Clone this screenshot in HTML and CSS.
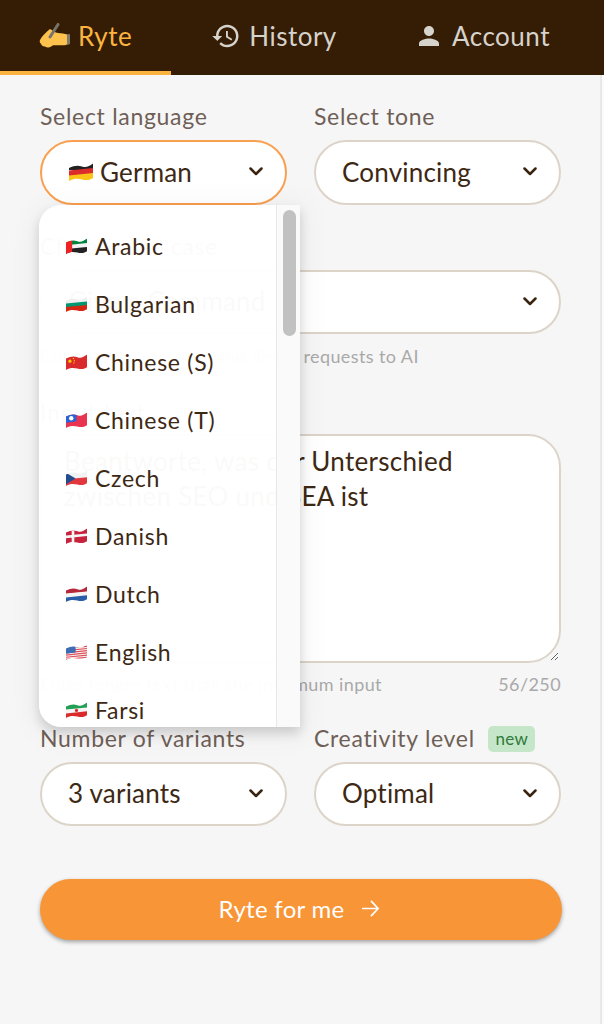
FILE: index.html
```html
<!DOCTYPE html>
<html lang="en">
<head>
<meta charset="utf-8">
<title>Ryte</title>
<link rel="stylesheet" href="styles.css">
</head>
<body>
<svg class="defs" width="0" height="0" aria-hidden="true">
  <defs>
    <clipPath id="wave"><path d="M0 5C5 2.500 9 2 13 3.500S20 3.500 24 .5V15C20 17.500 17 17.500 13 16.500S5 15 0 18Z"/></clipPath>
  </defs>
</svg>
<header class="tabs">
  <a class="tab active">
    <svg class="tab-icon hand" viewBox="0 0 31 26"><path d="M11 6C7 9 3 13 1 17c-.6 1.300-.3 3 1 3.800.7 2 2.500 3.200 4 2.700 1.500 1.300 4.500 1.300 6 0 1-.2 1.600-.6 1.800-1.300H24c2 0 4-.5 4.500-1.500V11.500c-3-1-6-1-9.500-1.500-3-.5-5-2.500-8-4Z" fill="#fdc24d"/><path d="M28 11.500 31 11v10l-3 1Z" fill="#7f7a70"/><path d="M19 1.500 11 14" stroke="#77736c" stroke-width="3" stroke-linecap="round"/></svg>
    <span>Ryte</span>
  </a>
  <a class="tab">
    <svg class="tab-icon" viewBox="0 0 24 24"><path d="M13 3c-4.970 0-9 4.030-9 9H1l3.890 3.890.07.14L9 12H6c0-3.870 3.130-7 7-7s7 3.130 7 7-3.130 7-7 7c-1.930 0-3.680-.79-4.940-2.060l-1.420 1.420C8.270 19.990 10.510 21 13 21c4.970 0 9-4.030 9-9s-4.030-9-9-9zm-1 5v5l4.280 2.540.72-1.210-3.500-2.080V8H12z"/></svg>
    <span>History</span>
  </a>
  <a class="tab">
    <svg class="tab-icon" viewBox="0 0 24 24"><path d="M12 12c2.210 0 4-1.790 4-4s-1.790-4-4-4-4 1.790-4 4 1.790 4 4 4zm0 2c-2.670 0-8 1.340-8 4v2h16v-2c0-2.660-5.330-4-8-4z"/></svg>
    <span>Account</span>
  </a>
</header>

<main class="form">
  <div class="row">
    <div class="field lang-field">
      <label class="label">Select language</label>
      <div class="select open">
        <svg class="flag flag-big" viewBox="0 0 24 18"><g clip-path="url(#wave)"><path fill="#222" d="M0 0h24v7H0z"/><path fill="#dd2c2c" d="M0 7.500 24 5v6L0 13.500z"/><path fill="#fcc419" d="M0 12.500 24 10v8H0z"/></g></svg>
        <span class="value">German</span>
        <svg class="chev" viewBox="0 0 14 9"><path d="M1.500 1.500 7 7l5.500-5.500"/></svg>
      </div>
      <div class="dropdown">
        <ul class="list">
          <li class="item"><svg class="flag" viewBox="0 0 24 18"><g clip-path="url(#wave)"><path fill="#00843d" d="M0 0h24v7.500L0 10z"/><path fill="#f4f4f4" d="M0 8 24 5.500v6L0 14z"/><path fill="#222" d="M0 12.500 24 10v8H0z"/><path fill="#e22" d="M0 0h7v18H0z"/></g></svg><span>Arabic</span></li>
          <li class="item"><svg class="flag" viewBox="0 0 24 18"><g clip-path="url(#wave)"><path fill="#f0f0f0" d="M0 0h24v7.500L0 10z"/><path fill="#00966e" d="M0 8.500 24 6v5.500L0 14z"/><path fill="#d62612" d="M0 12.500 24 10v8H0z"/></g></svg><span>Bulgarian</span></li>
          <li class="item"><svg class="flag" viewBox="0 0 24 18"><g clip-path="url(#wave)"><path fill="#d92b2b" d="M0 0h24v18H0z"/><circle cx="4.500" cy="8" r="1.800" fill="#fc0"/><circle cx="8.500" cy="5" r=".8" fill="#fc0"/><circle cx="9.500" cy="7.500" r=".8" fill="#fc0"/><circle cx="9" cy="10" r=".8" fill="#fc0"/></g></svg><span>Chinese (S)</span></li>
          <li class="item"><svg class="flag" viewBox="0 0 24 18"><g clip-path="url(#wave)"><path fill="#e8344e" d="M0 0h24v18H0z"/><path fill="#2a63d4" d="M0 0h12v10.500L0 12z"/><circle cx="6" cy="7" r="2.500" fill="#fff"/></g></svg><span>Chinese (T)</span></li>
          <li class="item"><svg class="flag" viewBox="0 0 24 18"><g clip-path="url(#wave)"><path fill="#f2f2f2" d="M0 0h24v7.500L0 10.500z"/><path fill="#e0383e" d="M0 10.500 24 8v10H0z"/><path fill="#234c8c" d="M0 3 11 9.500 0 16z"/></g></svg><span>Czech</span></li>
          <li class="item"><svg class="flag" viewBox="0 0 24 18"><g clip-path="url(#wave)"><path fill="#c8233c" d="M0 0h24v18H0z"/><path fill="#f5f5f5" d="M6.500 0h3v18h-3zM0 8.500 24 6v3L0 11.500z"/></g></svg><span>Danish</span></li>
          <li class="item"><svg class="flag" viewBox="0 0 24 18"><g clip-path="url(#wave)"><path fill="#b5283a" d="M0 0h24v6.500L0 9z"/><path fill="#f5f5f5" d="M0 8.500 24 6v5.500L0 14z"/><path fill="#2a5da8" d="M0 13 24 10.500V18H0z"/></g></svg><span>Dutch</span></li>
          <li class="item"><svg class="flag" viewBox="0 0 24 18"><g clip-path="url(#wave)"><path fill="#f5f5f5" d="M0 0h24v18H0z"/><path stroke="#e0505a" stroke-width="1.300" d="M0 7.500 24 5M0 10 24 7.500M0 12.500 24 10M0 15 24 12.500M0 17.500 24 15M12 3.500 24 2.500"/><path fill="#3d6cb5" d="M0 0h11v9.500L0 11z"/></g></svg><span>English</span></li>
          <li class="item"><svg class="flag" viewBox="0 0 24 18"><g clip-path="url(#wave)"><path fill="#239f56" d="M0 0h24v7.500L0 10z"/><path fill="#f5f5f5" d="M0 8.500 24 6v5.500L0 14z"/><path fill="#da2b2b" d="M0 13 24 10.500V18H0z"/><circle cx="12" cy="9.500" r="1.800" fill="#da2b2b"/></g></svg><span>Farsi</span></li>
        </ul>
        <div class="track"><div class="thumb"></div></div>
      </div>
    </div>
    <div class="field">
      <label class="label">Select tone</label>
      <div class="select">
        <span class="value">Convincing</span>
        <svg class="chev" viewBox="0 0 14 9"><path d="M1.500 1.500 7 7l5.500-5.500"/></svg>
      </div>
    </div>
  </div>

  <div class="field wide">
    <label class="label">Choose use case</label>
    <div class="select short">
      <span class="value">Give a Command</span>
      <svg class="chev" viewBox="0 0 14 9"><path d="M1.500 1.500 7 7l5.500-5.500"/></svg>
    </div>
    <p class="hint">Commands are short and direct requests to AI</p>
  </div>

  <div class="field wide input-field">
    <label class="label">Input text</label>
    <textarea class="textarea" spellcheck="false">Beantworte, was der Unterschied zwischen SEO und SEA ist</textarea>
    <div class="hint-row">
      <p class="hint">Enter longer text than the minimum input</p>
      <p class="hint">56/250</p>
    </div>
  </div>

  <div class="row last-row">
    <div class="field">
      <label class="label">Number of variants</label>
      <div class="select short">
        <span class="value">3 variants</span>
        <svg class="chev" viewBox="0 0 14 9"><path d="M1.500 1.500 7 7l5.500-5.500"/></svg>
      </div>
    </div>
    <div class="field">
      <label class="label">Creativity level <span class="badge">new</span></label>
      <div class="select short">
        <span class="value">Optimal</span>
        <svg class="chev" viewBox="0 0 14 9"><path d="M1.500 1.500 7 7l5.500-5.500"/></svg>
      </div>
    </div>
  </div>

  <button class="cta" type="button">
    <span>Ryte for me</span>
    <svg class="arrow" viewBox="0 0 20 20"><path d="M1 10h17M10.500 2 18 10l-7.500 8"/></svg>
  </button>
</main>
</body>
</html>
```

FILE: styles.css
```css
* { box-sizing: border-box; }
html, body { margin: 0; padding: 0; }
body {
  width: 604px;
  height: 1024px;
  overflow: hidden;
  background: #fbfbfb;
  font-family: "Lato", "Noto Sans", sans-serif;
  color: #3d2814;
}
.defs { position: absolute; }

.tabs {
  display: grid;
  grid-template-columns: 171px 206px 210px;
  height: 75px;
  background: #341d04;
}
.tab {
  display: flex;
  align-items: center;
  justify-content: center;
  gap: 8px;
  padding-bottom: 4px;
  font-size: 26px;
  letter-spacing: .5px;
  color: #d6d2cc;
}
.tab.active {
  color: #fbb440;
  box-shadow: inset 0 -4px 0 #fbb440;
}
.tab-icon { width: 30px; height: 30px; fill: #d6d2cc; flex: none; }
.hand { width: 31px; height: 26px; fill: none; }

.form {
  width: 602px;
  height: 949px;
  padding: 29px 0 0 40px;
  background: #f6f6f6;
  border-right: 2px solid #e8e8e8;
}
.row {
  display: grid;
  grid-template-columns: 247px 247px;
  gap: 27px;
}
.field { position: relative; }
.wide { width: 521px; margin-top: 29px; }
.label {
  display: block;
  height: 24px;
  margin-bottom: 12px;
  font-size: 23px;
  line-height: 24px;
  letter-spacing: .7px;
  color: #6f5f57;
}
.select {
  display: flex;
  align-items: center;
  height: 65px;
  padding: 0 22px 2px 26px;
  background: #fff;
  border: 2px solid #ddd4c9;
  border-radius: 33px;
  font-size: 26px;
}
.select.short { height: 64px; }
.select.open { border-color: #f9a050; }
.value { flex: 1; white-space: nowrap; letter-spacing: .2px; }
.flag { width: 21px; height: 16px; flex: none; }
.flag-big { width: 24px; height: 18px; margin: 0 7px 0 1px; }
.chev {
  width: 14px;
  height: 9px;
  flex: none;
  fill: none;
  stroke: #3a2410;
  stroke-width: 2.500;
  stroke-linecap: round;
  stroke-linejoin: round;
}

.hint {
  margin: 0;
  font-size: 18px;
  line-height: 22px;
  letter-spacing: .4px;
  color: #a9a9a9;
  white-space: nowrap;
}
.select + .hint { margin-top: 11px; }
.input-field { margin-top: 33px; }
.input-field .label { margin-bottom: 10px; }
.textarea {
  display: block;
  width: 521px;
  height: 229px;
  padding: 8px 22px;
  background: #fff;
  border: 2px solid #ddd4c9;
  border-radius: 33px;
  font: inherit;
  font-size: 26px;
  line-height: 35px;
  letter-spacing: .3px;
  color: #3d2814;
  outline: none;
}
.hint-row {
  display: flex;
  justify-content: space-between;
  width: 521px;
  margin-top: 10px;
}
.last-row { margin-top: 31px; }
.badge {
  display: inline-block;
  height: 26px;
  margin-left: 7px;
  padding: 0 7px;
  background: #c5e6c8;
  border-radius: 5px;
  font-size: 17px;
  line-height: 26px;
  letter-spacing: .4px;
  color: #2f7a3c;
  vertical-align: top;
}

.cta {
  display: flex;
  align-items: center;
  justify-content: center;
  gap: 16px;
  width: 522px;
  height: 61px;
  margin-top: 53px;
  padding: 0 4px 2px 0;
  background: #f89537;
  border: 0;
  border-radius: 31px;
  box-shadow: 0 2px 4px rgba(0, 0, 0, .35);
  font: inherit;
  font-size: 24px;
  letter-spacing: .3px;
  color: #fff;
}
.arrow {
  width: 19px;
  height: 19px;
  fill: none;
  stroke: #fff;
  stroke-width: 1.800;
}

.dropdown {
  position: absolute;
  top: 101px;
  left: -1px;
  display: flex;
  width: 261px;
  height: 522px;
  background: rgba(255, 255, 255, .975);
  border-radius: 22px 0 0 22px;
  box-shadow: 0 6px 12px rgba(0, 0, 0, .16), 0 4px 28px 8px rgba(0, 0, 0, .035);
  overflow: hidden;
  z-index: 5;
}
.list {
  flex: 1;
  margin: 0;
  padding: 12px 0 0 27px;
  list-style: none;
  overflow: hidden;
}
.item {
  display: flex;
  align-items: center;
  gap: 8px;
  height: 58px;
  font-size: 23px;
  letter-spacing: .7px;
  color: #3d2814;
}
.track {
  width: 24px;
  flex: none;
  padding: 5px 5px 0 6px;
  background: rgba(250, 250, 250, .9);
  border-left: 1px solid #e8e8e8;
}
.thumb {
  width: 13px;
  height: 126px;
  background: #c1c1c1;
  border-radius: 7px;
}
```
